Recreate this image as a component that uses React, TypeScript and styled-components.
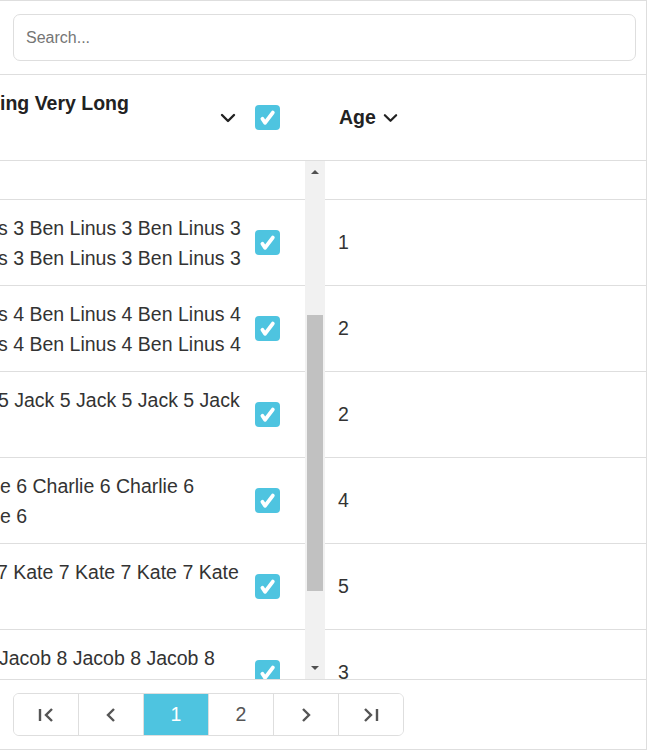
import React from "react";
import styled, { createGlobalStyle } from "styled-components";

const GlobalStyle = createGlobalStyle`
  html, body {
    margin: 0;
    padding: 0;
    background: #fff;
  }
  body {
    font-family: "Liberation Sans", Arial, sans-serif;
    color: #333;
    overflow: hidden;
  }
  * {
    box-sizing: border-box;
  }
`;

const BORDER = "#dedede";
const ACCENT = "#4ec4e0";

const Frame = styled.div`
  width: 647px;
  height: 750px;
  border-top: 1px solid ${BORDER};
  border-right: 1px solid ${BORDER};
  border-bottom: 1px solid ${BORDER};
  display: flex;
  flex-direction: column;
`;

const Toolbar = styled.div`
  padding: 13px 10px 13px 13px;
  border-bottom: 1px solid ${BORDER};
`;

const SearchInput = styled.input`
  display: block;
  width: 100%;
  height: 47px;
  border: 1px solid ${BORDER};
  border-radius: 7px;
  padding: 0 12px;
  font-family: "Liberation Sans", Arial, sans-serif;
  font-size: 16px;
  color: #333;
  outline: none;

  &::placeholder {
    color: #757575;
  }
`;

const HeaderRow = styled.div`
  display: flex;
  height: 86px;
  border-bottom: 1px solid ${BORDER};
`;

const HeadName = styled.div`
  width: 245px;
  display: flex;
  padding-right: 9px;
  overflow: hidden;
`;

const HeadTitle = styled.div`
  flex: 1;
  min-width: 0;
  padding-top: 13px;
  font-size: 19.5px;
  line-height: 30px;
  font-weight: 700;
  color: #222;
  white-space: nowrap;
`;

const SortIcon = styled.svg`
  align-self: center;
  flex: none;
`;

const CheckCell = styled.div`
  width: 60px;
  display: flex;
  align-items: center;
  padding-left: 10px;
`;

const Gutter = styled.div`
  width: 20px;
  flex: none;
`;

const AgeHead = styled.div`
  flex: 1;
  display: flex;
  align-items: center;
  gap: 7px;
  padding-left: 14px;
  font-size: 19.5px;
  font-weight: 700;
  color: #222;
`;

const Body = styled.div`
  position: relative;
  height: 519px;
  overflow: hidden;
  border-bottom: 1px solid ${BORDER};
`;

const Row = styled.div<{ $h: number }>`
  display: flex;
  height: ${(p) => p.$h}px;
  border-bottom: 1px solid ${BORDER};
  flex: none;
`;

const NameCell = styled.div`
  width: 245px;
  overflow: hidden;
  padding-top: 13px;
  font-size: 19.5px;
  line-height: 30px;
  color: #333;
`;

const NameLine = styled.div<{ $shift: number }>`
  white-space: nowrap;
  margin-left: ${(p) => -p.$shift}px;
`;

const AgeCell = styled.div`
  flex: 1;
  display: flex;
  align-items: center;
  padding-left: 13px;
  font-size: 19.5px;
  color: #333;
`;

const ScrollTrack = styled.div`
  position: absolute;
  top: 0;
  bottom: 0;
  left: 305px;
  width: 20px;
  background: #f1f1f1;
  display: flex;
  flex-direction: column;
`;

const ArrowBtn = styled.div`
  height: 22px;
  display: flex;
  align-items: center;
  justify-content: center;
`;

const Triangle = styled.div<{ $down?: boolean }>`
  width: 0;
  height: 0;
  border-left: 4px solid transparent;
  border-right: 4px solid transparent;
  ${(p) =>
    p.$down
      ? "border-top: 4px solid #505050;"
      : "border-bottom: 4px solid #505050;"}
`;

const Rail = styled.div`
  flex: 1;
  padding: 0 2px;
`;

const Thumb = styled.div<{ $offset: number; $size: number }>`
  margin-top: ${(p) => p.$offset}px;
  height: ${(p) => p.$size}px;
  background: #c1c1c1;
`;

const Footer = styled.div`
  flex: 1;
  padding: 13px 13px;
`;

const Pager = styled.div`
  display: inline-flex;
  height: 43px;
  border: 1px solid ${BORDER};
  border-radius: 6px;
  overflow: hidden;
`;

const PageBtn = styled.button<{ $active?: boolean }>`
  width: 65px;
  height: 100%;
  border: none;
  border-left: 1px solid ${BORDER};
  padding: 0;
  margin: 0;
  display: flex;
  align-items: center;
  justify-content: center;
  background: ${(p) => (p.$active ? ACCENT : "#fff")};
  color: ${(p) => (p.$active ? "#fff" : "#555")};
  font-family: "Liberation Sans", Arial, sans-serif;
  font-size: 19.5px;
  cursor: pointer;

  &:first-child {
    border-left: none;
    width: 64px;
  }
`;

const Checkbox = () => (
  <svg width="25" height="25" viewBox="0 0 25 25">
    <rect x="0" y="0" width="25" height="25" rx="4" fill={ACCENT} />
    <path
      d="M7.4 13.8 L10 17.8 L17.8 7.6"
      fill="none"
      stroke="#fff"
      strokeWidth="3.8"
      strokeLinecap="round"
      strokeLinejoin="round"
    />
  </svg>
);

const Chevron = ({ w = 16 }: { w?: number }) => (
  <SortIcon width={w} height="10" viewBox="0 0 16 10">
    <polyline
      points="2,2 8,8 14,2"
      fill="none"
      stroke="#222"
      strokeWidth="2.4"
      strokeLinecap="round"
      strokeLinejoin="round"
    />
  </SortIcon>
);

const PagerIcon = ({ kind }: { kind: "first" | "prev" | "next" | "last" }) => {
  const stroke = { fill: "none", stroke: "#555", strokeWidth: 2.4 };
  return (
    <svg width="18" height="14" viewBox="0 0 18 14">
      {kind === "first" && (
        <>
          <line x1="3" y1="1" x2="3" y2="13" {...stroke} />
          <polyline points="15,1 9,7 15,13" {...stroke} />
        </>
      )}
      {kind === "prev" && <polyline points="12,1 6,7 12,13" {...stroke} />}
      {kind === "next" && <polyline points="6,1 12,7 6,13" {...stroke} />}
      {kind === "last" && (
        <>
          <polyline points="3,1 9,7 3,13" {...stroke} />
          <line x1="15" y1="1" x2="15" y2="13" {...stroke} />
        </>
      )}
    </svg>
  );
};

type Person = { id: number; lines: string[]; shift: number; age: number };

// the name column is scrolled sideways, so only the tail of each line shows
const people: Person[] = [
  { id: 3, lines: ["s 3 Ben Linus 3 Ben Linus 3", "s 3 Ben Linus 3 Ben Linus 3"], shift: 2, age: 1 },
  { id: 4, lines: ["s 4 Ben Linus 4 Ben Linus 4", "s 4 Ben Linus 4 Ben Linus 4"], shift: 2, age: 2 },
  { id: 5, lines: ["5 Jack 5 Jack 5 Jack 5 Jack"], shift: 2, age: 2 },
  { id: 6, lines: ["e 6 Charlie 6 Charlie 6", "e 6"], shift: 0, age: 4 },
  { id: 7, lines: ["7 Kate 7 Kate 7 Kate 7 Kate"], shift: 3, age: 5 },
  { id: 8, lines: ["Jacob 8 Jacob 8 Jacob 8"], shift: 1, age: 3 },
];

const App = () => {
  return (
    <>
      <GlobalStyle />
      <Frame>
        <Toolbar>
          <SearchInput placeholder="Search..." />
        </Toolbar>

        <HeaderRow>
          <HeadName>
            <HeadTitle>ing Very Long</HeadTitle>
            <Chevron />
          </HeadName>
          <CheckCell>
            <Checkbox />
          </CheckCell>
          <Gutter />
          <AgeHead>
            Age
            <Chevron w={15} />
          </AgeHead>
        </HeaderRow>

        <Body>
          <Row $h={39}>
            <NameCell />
          </Row>
          {people.map((p) => (
            <Row key={p.id} $h={86}>
              <NameCell>
                {p.lines.map((line, i) => (
                  <NameLine key={i} $shift={p.shift}>
                    {line}
                  </NameLine>
                ))}
              </NameCell>
              <CheckCell>
                <Checkbox />
              </CheckCell>
              <Gutter />
              <AgeCell>{p.age}</AgeCell>
            </Row>
          ))}
          <ScrollTrack>
            <ArrowBtn>
              <Triangle />
            </ArrowBtn>
            <Rail>
              <Thumb $offset={132} $size={276} />
            </Rail>
            <ArrowBtn>
              <Triangle $down />
            </ArrowBtn>
          </ScrollTrack>
        </Body>

        <Footer>
          <Pager>
            <PageBtn>
              <PagerIcon kind="first" />
            </PageBtn>
            <PageBtn>
              <PagerIcon kind="prev" />
            </PageBtn>
            <PageBtn $active>1</PageBtn>
            <PageBtn>2</PageBtn>
            <PageBtn>
              <PagerIcon kind="next" />
            </PageBtn>
            <PageBtn>
              <PagerIcon kind="last" />
            </PageBtn>
          </Pager>
        </Footer>
      </Frame>
    </>
  );
};

export default App;
